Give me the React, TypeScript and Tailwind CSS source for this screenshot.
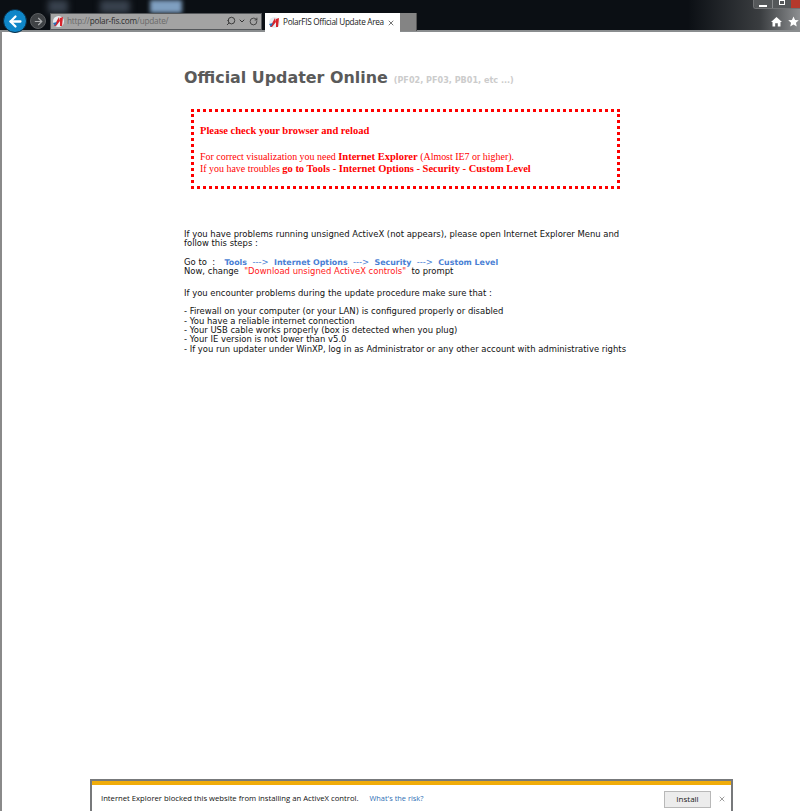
import React from 'react';
import { ArrowLeft, ArrowRight, RotateCw, Search, X, ChevronDown } from 'lucide-react';

const PolarIcon = () => (
  <svg width="11" height="11" viewBox="0 0 11 11" className="shrink-0">
    <circle cx="5.5" cy="5.5" r="5.5" fill="#e8eef2" />
    <path d="M1 10 L6 1 L7 5 L3 10 Z" fill="#d8232a" />
    <path d="M7 2 L10 1 L9 10 L7 10 Z" fill="#d8232a" />
    <path d="M0 7 L4 6 L2 10 Z" fill="#2a6db5" />
  </svg>
);

export default function App() {
  return (
    <div className="w-[800px] h-[811px] bg-white flex flex-col overflow-hidden font-['DejaVu_Sans',sans-serif]">
      {/* browser chrome */}
      <div className="relative z-10 h-[32px] shrink-0 flex items-end pl-[3px] bg-[linear-gradient(90deg,#0b0f14_0%,#0b0f14_86%,#3a3d40_95%,#8d8f91_100%)] border-b-2 border-[#8a8d8f]">
        <div className="absolute left-[48px] top-0 w-[20px] h-[13px] bg-[#39424e] blur-[3px]" />
        <div className="absolute left-[100px] top-0 w-[30px] h-[13px] bg-[#39424e] blur-[3px]" />
        <div className="absolute left-[150px] top-0 w-[32px] h-[13px] bg-[#7f9fc0] blur-[2px]" />

        <div className="relative z-10 flex items-center w-full h-[30px] pt-[12px]">
          <div className="w-[24px] h-[24px] rounded-full bg-[#0f86c8] border border-[#0a2a40] flex items-center justify-center shrink-0">
            <ArrowLeft size={17} strokeWidth={3.2} className="text-white" />
          </div>
          <div className="ml-[3px] w-[16px] h-[16px] rounded-full bg-[#3f4245] border border-[#5a5d60] flex items-center justify-center shrink-0">
            <ArrowRight size={11} strokeWidth={2.6} className="text-[#a9abad]" />
          </div>
          <div className="ml-[4px] w-[212px] h-[17px] bg-[#a3a3a3] border border-[#55585b] flex items-center pl-[2px] pr-[2px] text-[8.2px] tracking-[-0.2px] font-['Open_Sans',sans-serif] shrink-0">
            <PolarIcon />
            <span className="ml-[3px] text-[#6a6a6a]">http://</span>
            <span className="text-[#2e2e2e]">polar-fis.com</span>
            <span className="text-[#6a6a6a]">/update/</span>
            <Search size={10} strokeWidth={2.2} className="ml-auto text-[#333] -scale-x-100" />
            <ChevronDown size={8} strokeWidth={3} className="ml-[2px] text-[#333]" />
            <RotateCw size={9} strokeWidth={2.2} className="ml-[3px] text-[#333] mr-[1px]" />
          </div>
          <div className="ml-[3px] mt-[3px] w-[135px] h-[19px] bg-white flex items-center pl-[4px] text-[8.2px] tracking-[-0.3px] font-['Open_Sans',sans-serif] text-[#222] whitespace-nowrap shrink-0">
            <PolarIcon />
            <span className="ml-[3px]">PolarFIS Official Update Area</span>
            <X size={8} strokeWidth={3} className="ml-auto mr-[5px] text-[#777]" />
          </div>
          <div className="mt-[1px] w-[17px] h-[18px] bg-[#848484] border-r border-[#555] shrink-0" />
          <div className="ml-auto flex items-center gap-[6px] pr-[1px]">
            <svg width="11" height="11" viewBox="0 0 11 11" fill="white">
              <path d="M5.5 1 L11 6 L9.5 6 L9.5 10.5 L6.8 10.5 L6.8 7.2 L4.2 7.2 L4.2 10.5 L1.5 10.5 L1.5 6 L0 6 Z" />
            </svg>
            <svg width="11" height="11" viewBox="0 0 24 24" fill="white">
              <path d="M12 1 L15.4 8.6 L23.5 9.4 L17.4 14.9 L19.1 23 L12 18.8 L4.9 23 L6.6 14.9 L.5 9.4 L8.6 8.6 Z" />
            </svg>
          </div>
        </div>

        {/* window buttons */}
        <div className="absolute right-0 top-0 w-[47px] h-[9px] flex border border-t-0 border-r-0 border-[#707274] rounded-bl-[3px] overflow-hidden">
          <div className="w-[19px] bg-[#55585a] border-r border-[#8a8c8e] flex items-end justify-center pb-[1px]">
            <div className="w-[8px] h-[2px] bg-white" />
          </div>
          <div className="w-[18px] bg-[#55585a] flex items-start justify-center">
            <div className="w-[6px] h-[5px] border border-white" />
          </div>
          <div className="flex-1 bg-[#b5392c]" />
        </div>
      </div>

      <div className="flex-1 flex flex-col border-l-2 border-[#8a8a8a]">
        {/* page */}
        <div className="flex-1 pl-[182px]">
          <div className="w-[450px] pt-[35px]">
            <h1 className="flex items-baseline h-[22px] text-[15.9px] leading-[22px] font-bold text-[#5a5a5a] whitespace-nowrap">
              Official Updater Online
              <span className="ml-[6px] text-[8.1px] text-[#cccccc]">(PF02, PF03, PB01, etc ...)</span>
            </h1>

            <div className="mt-[20px] ml-[7px] w-[429px] h-[80px] border-[3px] border-dotted border-[#ff0000] pl-[6px] pt-[13px] font-['Liberation_Serif',serif] text-[9.95px] leading-[12px] text-[#ff0000]">
              <p className="font-bold text-[10.5px] h-[26px]">Please check your browser and reload</p>
              <p>For correct visualization you need <b className="text-[10.5px]">Internet Explorer</b> (Almost IE7 or higher).</p>
              <p>If you have troubles <b className="text-[10.5px]">go to Tools - Internet Options - Security - Custom Level</b></p>
            </div>

            <div className="mt-[41px] text-[8.45px] leading-[9.3px] text-[#111] whitespace-nowrap">
              <p>If you have problems running unsigned ActiveX (not appears), please open Internet Explorer Menu and</p>
              <p>follow this steps :</p>
              <p className="mt-[9.5px]">
                Go to&nbsp; :&nbsp;&nbsp;
                <b className="ml-[4px] text-[7.9px] text-[#4a7fd4]">Tools</b>
                <span className="text-[#4a7fd4]">&nbsp; ---&gt;&nbsp; </span>
                <b className="text-[7.9px] text-[#4a7fd4]">Internet Options</b>
                <span className="text-[#4a7fd4]">&nbsp; ---&gt;&nbsp; </span>
                <b className="text-[7.9px] text-[#4a7fd4]">Security</b>
                <span className="text-[#4a7fd4]">&nbsp; ---&gt;&nbsp; </span>
                <b className="text-[7.9px] text-[#4a7fd4]">Custom Level</b>
              </p>
              <p>
                Now, change&nbsp; <span className="text-[#ff2020]">"Download unsigned ActiveX controls"</span>&nbsp; to prompt
              </p>
              <p className="mt-[12px]">If you encounter problems during the update procedure make sure that :</p>
              <p className="mt-[9.5px]">- Firewall on your computer (or your LAN) is configured properly or disabled</p>
              <p>- You have a reliable internet connection</p>
              <p>- Your USB cable works properly (box is detected when you plug)</p>
              <p>- Your IE version is not lower than v5.0</p>
              <p>- If you run updater under WinXP, log in as Administrator or any other account with administrative rights</p>
            </div>
          </div>
        </div>

        {/* activex notification */}
        <div className="shrink-0 ml-[88px] w-[643px] h-[32px] border-2 border-b-0 border-[#77797b] flex flex-col">
          <div className="h-[4px] bg-[#f0ac0a]" />
          <div className="flex-1 flex items-center pt-[2px] pl-[9px] text-[7.7px] font-['Open_Sans',sans-serif] text-[#111] whitespace-nowrap">
            <span>Internet Explorer blocked this website from installing an ActiveX control.</span>
            <span className="ml-[11px] text-[7.4px] text-[#2f6fb5]">What's the risk?</span>
            <button className="ml-auto w-[47px] h-[17px] bg-[#ececec] border border-[#b8b8b8] text-[8px] text-[#1a1a1a]">Install</button>
            <X size={8} strokeWidth={2.5} className="ml-[7px] mr-[5px] text-[#8a8a8a]" />
          </div>
        </div>
      </div>
    </div>
  );
}
